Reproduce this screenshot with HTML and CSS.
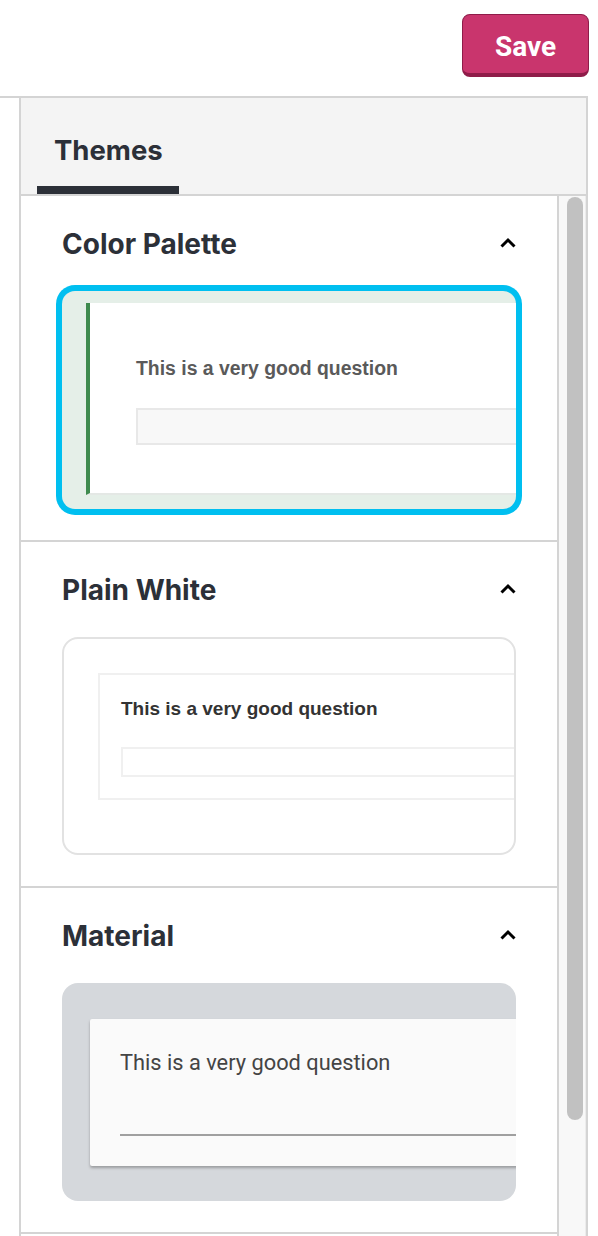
FILE: index.html
```html
<!DOCTYPE html>
<html>
<head>
<meta charset="utf-8">
<title>Themes</title>
<link rel="stylesheet" href="styles.css">
</head>
<body>
<div class="page">
  <header class="topbar">
    <button class="save">Save</button>
  </header>
  <div class="main">
    <div class="gutter"></div>
    <section class="panel">
      <div class="tabs">
        <div class="tab active">
          <span class="tab-label">Themes</span>
          <span class="tab-bar"></span>
        </div>
      </div>
      <div class="content">
        <div class="list">
          <div class="theme">
            <div class="theme-head">
              <h2>Color Palette</h2>
              <svg class="chev" width="18" height="12" viewBox="0 0 18 12"><polyline points="2.5,9.5 9,3 15.5,9.5" fill="none" stroke="#000" stroke-width="3"/></svg>
            </div>
            <div class="card card-palette selected">
              <div class="pq">
                <p class="pq-text">This is a very good question</p>
                <div class="pq-input"></div>
              </div>
            </div>
          </div>
          <div class="theme">
            <div class="theme-head">
              <h2>Plain White</h2>
              <svg class="chev" width="18" height="12" viewBox="0 0 18 12"><polyline points="2.5,9.5 9,3 15.5,9.5" fill="none" stroke="#000" stroke-width="3"/></svg>
            </div>
            <div class="card card-plain">
              <div class="wq">
                <p class="wq-text">This is a very good question</p>
                <div class="wq-input"></div>
              </div>
            </div>
          </div>
          <div class="theme">
            <div class="theme-head">
              <h2>Material</h2>
              <svg class="chev" width="18" height="12" viewBox="0 0 18 12"><polyline points="2.5,9.5 9,3 15.5,9.5" fill="none" stroke="#000" stroke-width="3"/></svg>
            </div>
            <div class="card card-material">
              <div class="mq">
                <p class="mq-text">This is a very good question</p>
                <div class="mq-line"></div>
              </div>
            </div>
          </div>
        </div>
        <div class="scrollbar"><div class="thumb"></div></div>
      </div>
    </section>
  </div>
</div>
</body>
</html>
```
FILE: styles.css
```css
* { box-sizing: border-box; }
html, body { margin: 0; padding: 0; background: #fff; }
body { font-family: "Inter", "Liberation Sans", Arial, sans-serif; color: #2c3038; }

.page { width: 598px; height: 1236px; overflow: hidden; }

.topbar {
  width: 588px;
  height: 98px;
  border-bottom: 2px solid #d4d4d4;
  display: flex;
  justify-content: flex-end;
  align-items: flex-start;
  padding-top: 14px;
}
.save {
  margin-right: -1px;
  width: 127px;
  height: 63px;
  border: 1px solid #8f1c49;
  border-bottom-width: 4px;
  border-radius: 8px;
  background: #c9356d;
  color: #fff;
  font-family: "Roboto", "Liberation Sans", sans-serif;
  font-weight: 700;
  font-size: 28px;
  padding: 4px 0 0;
}

.main { display: flex; height: 1138px; }
.gutter { width: 19px; flex: none; }
.panel {
  width: 569px;
  border-left: 2px solid #d4d4d4;
  border-right: 2px solid #d4d4d4;
  display: flex;
  flex-direction: column;
}

.tabs {
  height: 98px;
  background: #f4f4f4;
  border-bottom: 2px solid #d4d4d4;
  display: flex;
  padding-left: 16px;
}
.tab {
  width: 142px;
  height: 96px;
  display: flex;
  flex-direction: column;
  justify-content: space-between;
  padding-top: 36px;
}
.tab-label {
  display: block;
  padding-left: 17px;
  font-size: 27.5px;
  line-height: 32px;
  font-weight: 700;
  color: #2c3038;
}
.tab-bar { display: block; height: 8px; background: #2c3038; }

.content { display: flex; flex: 1; overflow: hidden; }
.list {
  width: 538px;
  flex: none;
  border-right: 2px solid #d4d4d4;
}
.scrollbar {
  flex: 1;
  background: #f8f8f8;
  border-right: 1px solid #ececec;
  padding: 1px 0 0 8px;
}
.thumb { width: 16px; height: 923px; border-radius: 8px; background: #c1c1c1; }

.theme {
  padding: 32px 41px 31px 41px;
  border-bottom: 2px solid #d4d4d4;
}
.theme-head {
  height: 32px;
  display: flex;
  justify-content: space-between;
  align-items: center;
  margin-bottom: 31px;
}
.theme-head h2 {
  margin: 0;
  font-size: 28px;
  line-height: 32px;
  font-weight: 700;
  color: #2c3038;
}
.chev { margin-right: -1px; margin-top: -2px; }

.card {
  height: 218px;
  border-radius: 16px;
  overflow: hidden;
}

/* Color palette preview */
.card-palette { background: #e5efe8; padding: 12px 0 0 24px; }
.selected { box-shadow: 0 0 0 6px #00bff0; border-radius: 13px; }
.pq {
  width: 480px;
  height: 192px;
  background: #fff;
  border-left: 4px solid #3e8a4e;
  border-bottom: 2px solid #e4e8e5;
  padding: 53px 0 0 46px;
}
.pq-text {
  margin: 0;
  font-family: "Liberation Sans", Arial, sans-serif;
  font-weight: 700;
  font-size: 19.4px;
  line-height: 24px;
  color: #5a5a5a;
}
.pq-input {
  margin-top: 28px;
  height: 37px;
  background: #f8f8f8;
  border: 2px solid #e8e8e8;
  border-right: none;
}

/* Plain white preview */
.card-plain { border: 2px solid #e2e2e2; padding: 34px 0 0 34px; }
.wq {
  width: 480px;
  height: 127px;
  border: 2px solid #f0f0f0;
  border-right: none;
  padding: 22px 0 0 21px;
}
.wq-text {
  margin: 0;
  font-family: "Liberation Sans", Arial, sans-serif;
  font-weight: 700;
  font-size: 19px;
  line-height: 24px;
  color: #333;
}
.wq-input {
  margin-top: 26px;
  height: 30px;
  border: 2px solid #f0f0f0;
  border-right: none;
}

/* Material preview */
.card-material { background: #d5d8dc; padding: 36px 0 0 28px; }
.mq {
  width: 480px;
  height: 147px;
  background: #fafafa;
  box-shadow: 0 2px 3px rgba(0, 0, 0, 0.28);
  border-radius: 2px 0 0 2px;
  padding: 31px 0 0 30px;
}
.mq-text {
  margin: 0;
  font-family: "Roboto", "Liberation Sans", sans-serif;
  font-weight: 400;
  font-size: 21.8px;
  line-height: 26px;
  color: #444;
}
.mq-line { margin-top: 58px; height: 2px; background: #a0a0a0; }
```
